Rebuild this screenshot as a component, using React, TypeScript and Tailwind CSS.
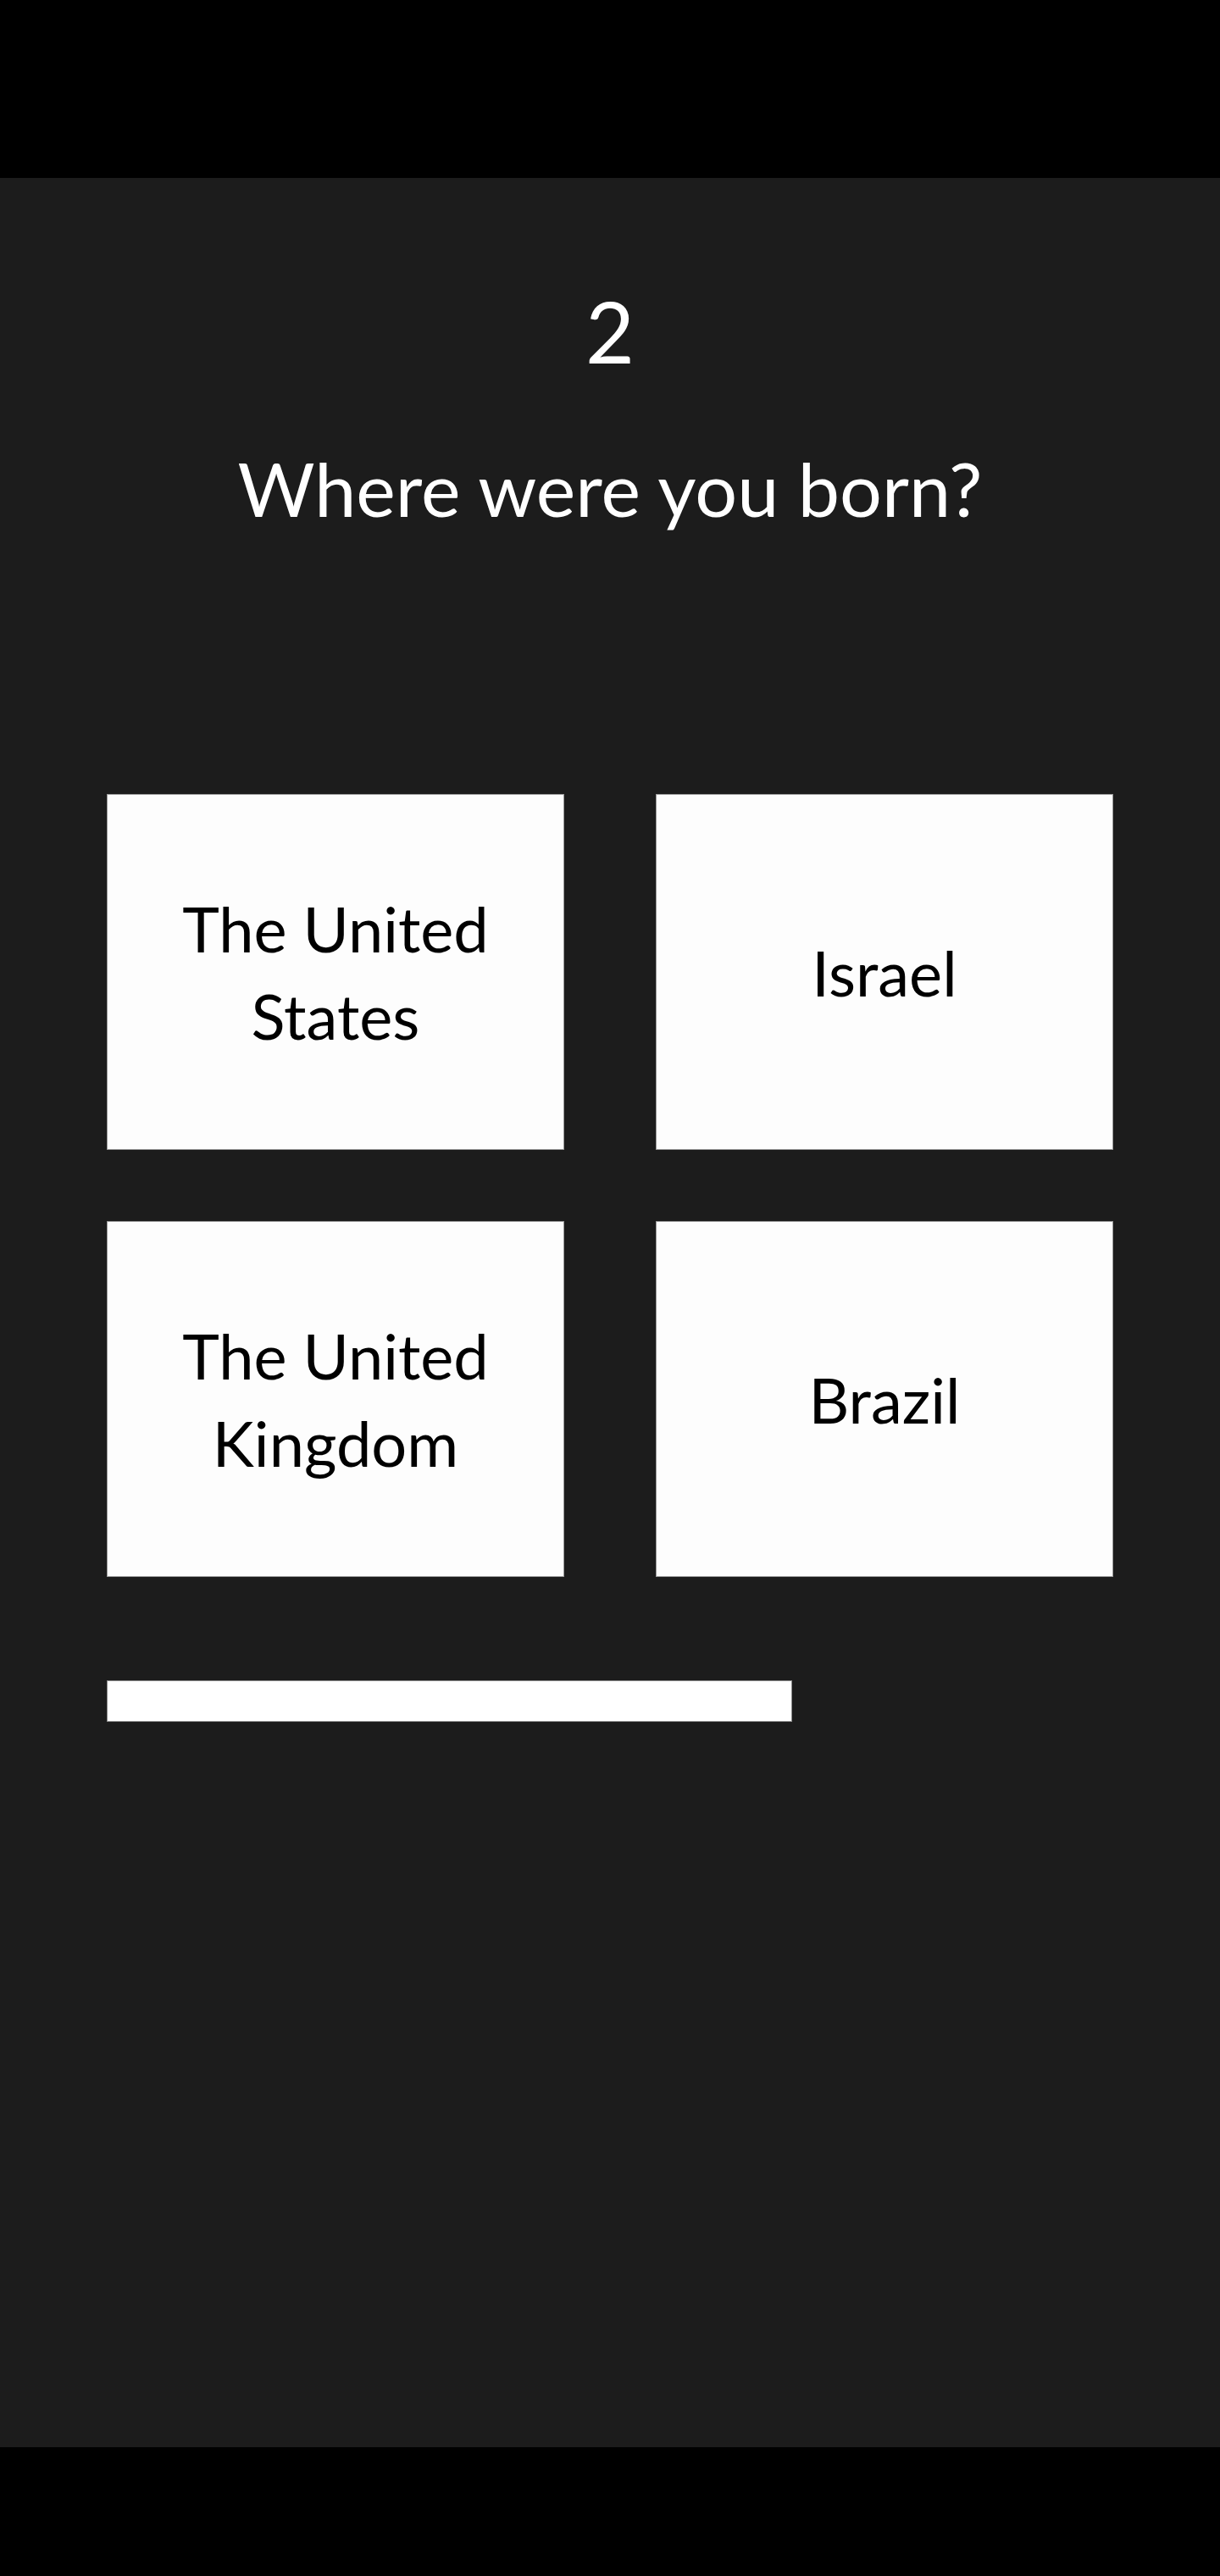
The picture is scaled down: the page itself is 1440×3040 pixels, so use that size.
const answers = ["The United States", "Israel", "The United Kingdom", "Brazil"];

const App = () => {
    return (
        <div className="flex flex-col h-[3040px] bg-black font-['Lato',sans-serif]">
            {/* status bar area */}
            <div className="h-[210px] bg-black" />

            <main className="flex-1 bg-[#1c1c1c] px-[126px] pt-[130px]">
                <div className="text-center text-white text-[100px] leading-none">2</div>
                <h1 className="mt-[92px] text-center text-white text-[88px] leading-none font-normal">
                    Where were you born?
                </h1>

                <div className="mt-[317px] grid grid-cols-2 gap-x-[108px] gap-y-[84px]">
                    {answers.map((a) => (
                        <button
                            key={a}
                            className="h-[420px] bg-[#fdfdfd] border border-[#9a9a9a] flex items-center justify-center px-[80px] text-black text-[74px] leading-[103px] text-center"
                        >
                            {a}
                        </button>
                    ))}
                </div>

                {/* timer */}
                <div className="mt-[122px] h-[49px] w-[809px] bg-white border border-[#8a8a8a]" />
            </main>

            <div className="h-[152px] bg-black" />
        </div>
    );
};

export default App;
